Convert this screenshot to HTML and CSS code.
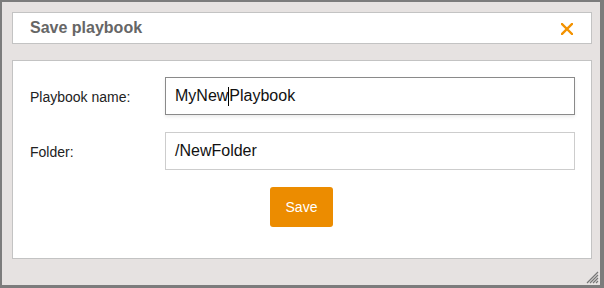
FILE: index.html
```html
<!DOCTYPE html>
<html>
<head>
<meta charset="utf-8">
<link rel="stylesheet" href="styles.css">
</head>
<body>
<div class="dialog">
  <div class="header">
    <span class="title">Save playbook</span>
    <svg class="close" width="12" height="12" viewBox="0 0 12 12"><path d="M1 1 L11 11 M11 1 L1 11" stroke="#f39200" stroke-width="2.4" stroke-linecap="square"/></svg>
  </div>
  <div class="content">
    <div class="form">
      <label class="label">Playbook name:</label>
      <div class="field focused">MyNew<span class="caret"></span>Playbook</div>
      <label class="label">Folder:</label>
      <div class="field">/NewFolder</div>
    </div>
    <div class="actions"><button class="save">Save</button></div>
  </div>
  <svg class="grip" width="14" height="14" viewBox="0 0 14 14"><path d="M13 2 L2 13 M13 5 L5 13 M13 8 L8 13 M13 11 L11 13" stroke="#777" stroke-width="1.2"/></svg>
</div>
</body>
</html>
```
FILE: styles.css
```css
html, body { margin: 0; padding: 0; }
body {
  width: 604px; height: 288px; overflow: hidden;
  background: #7c7c7c;
  font-family: "Liberation Sans", Arial, sans-serif;
}
.dialog {
  position: relative;
  box-sizing: border-box;
  margin: 2px 0 0 2px;
  width: 598px; height: 283px;
  background: #e6e2e1;
  padding: 10px 8px 0 10px;
}
.header {
  box-sizing: border-box;
  height: 32px;
  background: #fff;
  border: 1px solid #c3c3c3;
  display: flex; align-items: center; justify-content: space-between;
  padding: 0 18px 0 17px;
}
.title { font-weight: bold; font-size: 16px; color: #666; }
.close { display: block; margin-top: 1px; }
.content {
  box-sizing: border-box;
  margin-top: 16px;
  height: 199px;
  background: #fff;
  border: 1px solid #c3c3c3;
  padding: 16px 16px 0 17px;
}
.form {
  display: grid;
  grid-template-columns: 135px 1fr;
  row-gap: 17px;
  align-items: center;
}
.label { font-size: 14px; color: #222; padding-top: 2px; }
.field {
  box-sizing: border-box;
  height: 38px;
  border: 1px solid #cdcdcd;
  padding: 0 9px;
  font-size: 16px; color: #111;
  display: flex; align-items: center;
  background: #fff;
}
.field.focused {
  border-color: #8a8a8a;
  box-shadow: 0 2px 3px rgba(0,0,0,0.08);
}
.caret { display: inline-block; width: 1px; height: 19px; background: #000; }
.actions { display: flex; justify-content: flex-start; padding-left: 240px; margin-top: 17px; }
.save {
  width: 63px; height: 40px;
  border: none; border-radius: 3px;
  background: #ec8c00; color: #fff;
  font-family: "Liberation Sans", Arial, sans-serif; font-size: 14px;
  padding: 0;
}
.grip { position: absolute; right: 1px; bottom: 1px; }
```
